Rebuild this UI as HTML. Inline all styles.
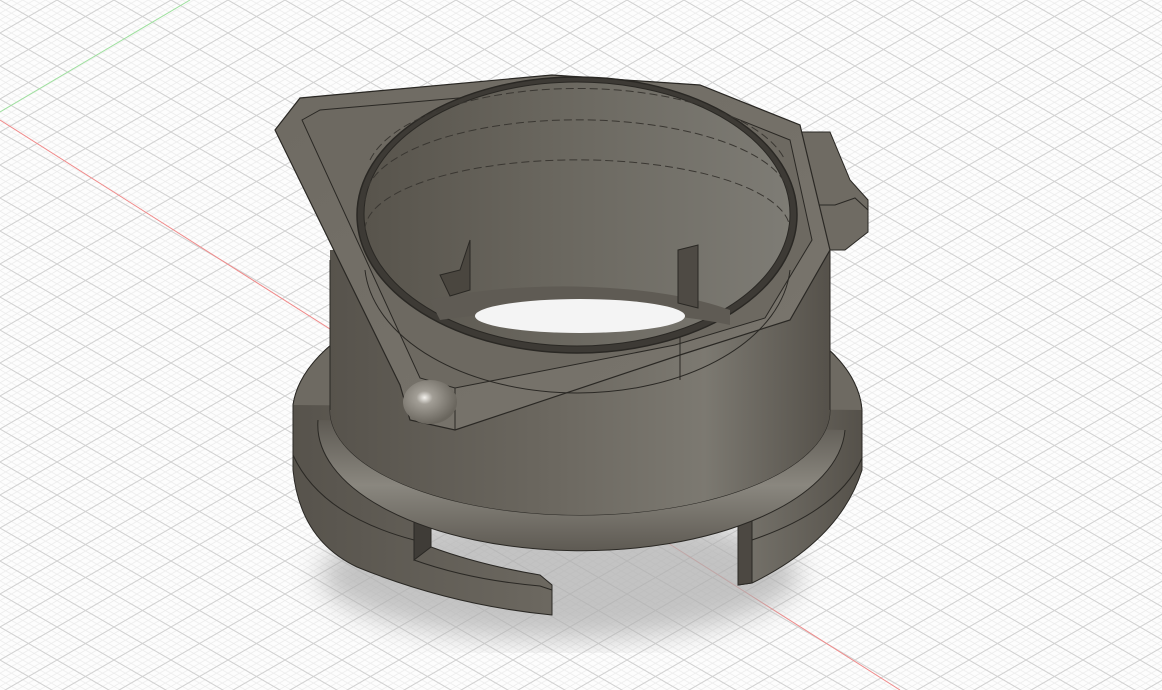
<!DOCTYPE html>
<html><head><style>html,body{margin:0;padding:0;background:#fff;overflow:hidden}svg{display:block}</style></head><body>
<svg width="1162" height="690" viewBox="0 0 1162 690" xmlns="http://www.w3.org/2000/svg">
<defs>
<pattern id="gmin" width="11.4" height="6.6" patternUnits="userSpaceOnUse">
<path d="M0 0L11.4 6.6M0 6.6L11.4 0" stroke="#ececec" stroke-width="0.8" fill="none"/>
</pattern>
<pattern id="gmaj" width="57" height="33" patternUnits="userSpaceOnUse">
<path d="M0 0L57 33M0 33L57 0" stroke="#d2d2d2" stroke-width="1" fill="none"/>
</pattern>
<linearGradient id="body" x1="0" x2="1">
<stop offset="0" stop-color="#57534c"/><stop offset="0.45" stop-color="#6c6860"/><stop offset="0.75" stop-color="#7c7971"/><stop offset="1" stop-color="#55514a"/>
</linearGradient>
<linearGradient id="inner" x1="0" x2="1">
<stop offset="0" stop-color="#58544c"/><stop offset="0.5" stop-color="#6c6961"/><stop offset="1" stop-color="#7e7c75"/>
</linearGradient>
<linearGradient id="plate" x1="0" y1="0" x2="1" y2="1">
<stop offset="0" stop-color="#6e6a62"/><stop offset="1" stop-color="#7a766e"/>
</linearGradient>
<linearGradient id="bulge" x1="0" y1="0" x2="0" y2="1">
<stop offset="0" stop-color="#5e5a53"/><stop offset="0.5" stop-color="#8a877f"/><stop offset="1" stop-color="#5e5a53"/>
</linearGradient>
<radialGradient id="ball" cx="0.4" cy="0.4" r="0.6">
<stop offset="0" stop-color="#f4f2ee"/><stop offset="0.25" stop-color="#a29e96"/><stop offset="1" stop-color="#6a665e"/>
</radialGradient>
<filter id="blur"><feGaussianBlur stdDeviation="14"/></filter>
</defs>
<rect width="1162" height="690" fill="#fdfdfd"/>
<rect width="1162" height="690" fill="url(#gmin)"/>
<rect width="1162" height="690" fill="url(#gmaj)"/>
<line x1="0" y1="120" x2="900" y2="690" stroke="#f08a8a" stroke-width="1"/>
<line x1="0" y1="112" x2="190" y2="0" stroke="#9ee09e" stroke-width="1"/>
<ellipse cx="560" cy="575" rx="240" ry="65" fill="#b0b0b0" filter="url(#blur)" opacity="0.75"/>
<path d="M293 405 L293 470 Q300 540 357 567 Q450 605 552 615 L552 585 L540 575 Q480 565 431 547 L414 540 L414 500 L431 507 Q586 591 733 503 L738 505 L738 585 L752 583 Q840 540 862 470 L862 410 A285 140 0 0 0 293 405 Z" fill="url(#body)" stroke="#2a2824" stroke-width="1"/>
<path d="M414 500 L431 507 L431 547 L414 560 Z" fill="#3f3c37" stroke="#2a2824"/>
<path d="M414 560 Q470 580 540 586 L552 590" fill="none" stroke="#2a2824"/>
<path d="M738 505 L752 500 L752 583 L738 585 Z" fill="#4c4842" stroke="#2a2824"/>
<path d="M293 455 Q320 515 414 540 M752 540 Q840 510 862 458" fill="none" stroke="#2a2824"/>
<path d="M318 420 A262 125 0 0 0 845 430" fill="url(#bulge)" stroke="#2a2824"/>
<path d="M330 410 A250 105 0 0 0 830 410" fill="none" stroke="#2a2824"/>
<path d="M293 405 A285 140 0 0 1 862 410" fill="#6e6a62" stroke="#2a2824"/>
<path d="M330 250 L330 410 A250 105 0 0 0 830 410 L830 250 Z" fill="url(#body)"/>
<path d="M330 260 L330 410 M830 250 L830 410" stroke="#2a2824"/>
<path d="M775 140 L800 132 L830 132 L850 180 L868 200 L868 232 L845 250 L820 250 L800 230 Z" fill="#6f6b63" stroke="#2a2824"/>
<path d="M800 205 L835 205 L855 198 L868 210" fill="none" stroke="#2a2824"/>
<path d="M275 130 L300 98 L552 75 L700 85 L800 125 L830 250 L790 320 L680 355 L455 430 L410 420 L400 385 Z" fill="url(#plate)" stroke="#2a2824" stroke-width="1.2"/>
<path d="M302 120 L320 110 L550 90 L690 100 L790 140 L812 240 L765 318 L675 345 L455 388 L420 378 Z" fill="#6d6961" stroke="#2a2824"/>
<path d="M680 330 L680 380 M455 388 L455 430" stroke="#2a2824"/>
<ellipse cx="430" cy="402" rx="27" ry="22" fill="url(#ball)"/>
<ellipse cx="577" cy="215" rx="220" ry="138" fill="#3d3a35" stroke="#2a2824" stroke-width="1.5"/>
<ellipse cx="577" cy="214" rx="213" ry="132" fill="url(#inner)" stroke="#2a2824"/>
<path d="M430 300 A210 60 0 0 1 730 310 L730 325 A200 35 0 0 0 440 320 Z" fill="#5f5b54"/>
<ellipse cx="580" cy="316" rx="105" ry="17" fill="#f4f4f4"/>
<path d="M365 270 A213 132 0 0 0 790 270" fill="none" stroke="#2a2824"/>
<path d="M370 160 A212 90 0 0 1 785 160" fill="none" stroke="#3a3732" stroke-dasharray="8 4"/>
<path d="M365 200 A212 80 0 0 1 790 200" fill="none" stroke="#3a3732" stroke-dasharray="8 4"/>
<path d="M365 230 A212 70 0 0 1 790 230" fill="none" stroke="#3a3732" stroke-dasharray="8 4"/>
<path d="M440 275 L460 270 L470 240 L470 290 L450 296 Z" fill="#4a463f" stroke="#2a2824"/>
<path d="M678 250 L698 245 L698 308 L678 303 Z" fill="#4e4a44" stroke="#2a2824"/>
</svg>
</body></html>
